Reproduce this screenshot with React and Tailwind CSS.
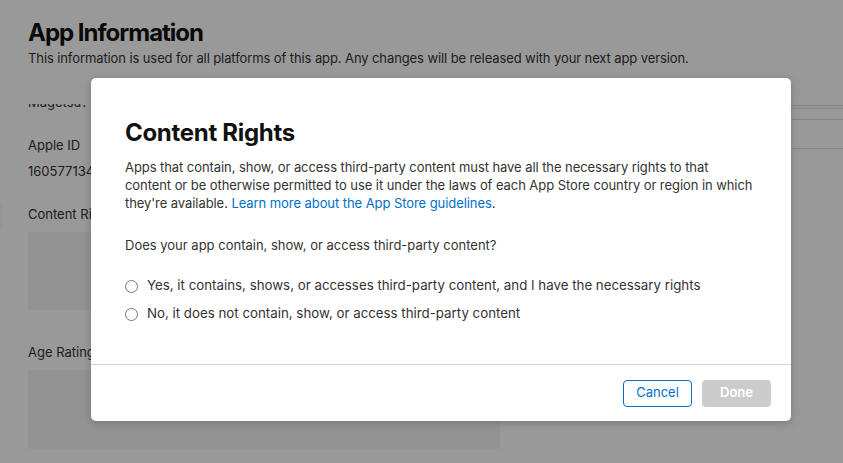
import { useState } from 'react'

const options = [
  { id: 'yes', label: 'Yes, it contains, shows, or accesses third-party content, and I have the necessary rights' },
  { id: 'no', label: 'No, it does not contain, show, or access third-party content' },
]

function Radio({ label, checked, onChange }) {
  return (
    <label className="flex items-center gap-[9px] h-[20px] cursor-pointer">
      <span
        className={`w-[13px] h-[13px] rounded-full border bg-white flex items-center justify-center ${
          checked ? 'border-[#0070c9]' : 'border-[#767676]'
        }`}
        onClick={onChange}
      >
        {checked && <span className="w-[7px] h-[7px] rounded-full bg-[#0070c9]" />}
      </span>
      <span className="text-[13.3px] text-[#333]" onClick={onChange}>
        {label}
      </span>
    </label>
  )
}

function ContentRightsModal() {
  const [value, setValue] = useState(null)

  return (
    <div className="w-[700px] h-[343px] bg-white rounded-[5px] shadow-[0_2px_10px_rgba(0,0,0,0.2)] flex flex-col">
      <div className="flex-1 pt-[40px] px-[34px]">
        <h2 className="text-[24px] leading-[30px] font-bold text-[#111] tracking-[-0.3px]">Content Rights</h2>
        <p className="mt-[10px] text-[13px] leading-[18px] text-[#333] tracking-[-0.07px]">
          Apps that contain, show, or access third-party content must have all the necessary rights to that
          content or be otherwise permitted to use it under the laws of each App Store country or region in which
          they're available.{' '}
          <a href="#" className="text-[#0070c9]">
            Learn more about the App Store guidelines
          </a>
          .
        </p>
        <p className="mt-[24px] text-[13px] leading-[18px] text-[#333]">
          Does your app contain, show, or access third-party content?
        </p>
        <div className="mt-[22px] flex flex-col gap-[8px]">
          {options.map((o) => (
            <Radio key={o.id} label={o.label} checked={value === o.id} onChange={() => setValue(o.id)} />
          ))}
        </div>
      </div>
      <div className="h-[57px] border-t border-[#d6d6d6] flex items-center justify-end gap-[10px] pr-[20px]">
        <button className="w-[69px] h-[27px] rounded-[4px] border border-[#0070c9] text-[13px] text-[#0070c9]">
          Cancel
        </button>
        <button
          disabled={!value}
          className={`w-[69px] h-[27px] rounded-[4px] text-[13px] font-semibold text-white ${
            value ? 'bg-[#0070c9]' : 'bg-[#cccccc]'
          }`}
        >
          Done
        </button>
      </div>
    </div>
  )
}

export default function App() {
  return (
    <div className="relative w-[843px] h-[463px] overflow-hidden bg-white font-['Inter',sans-serif]">
      {/* page behind */}
      <div className="pt-[18px]">
        <div className="pl-[28px]">
          <h1 className="text-[24px] leading-[30px] font-bold text-[#111] tracking-[-1px]">App Information</h1>
          <p className="mt-[1px] text-[13px] leading-[18px] text-[#333] tracking-[-0.1px]">
            This information is used for all platforms of this app. Any changes will be released with your next app
            version.
          </p>
        </div>
        <div className="mt-[37px] h-[360px] overflow-hidden flex">
          <div className="w-[3px] shrink-0 pt-[99px]">
            <div className="h-[25px] bg-[#f9f9f9] rounded-r-[3px]" />
          </div>
          <div className="w-[532px] pl-[25px] -mt-[11px]">
            <div className="text-[13px] leading-[18px] text-[#333]">Magetsu?</div>
            <div className="mt-[25px] text-[13px] leading-[18px] text-[#333]">Apple ID</div>
            <div className="mt-[8px] text-[13px] leading-[18px] text-[#333]">1605771349</div>
            <div className="mt-[25px] text-[13px] leading-[18px] text-[#333]">Content Rights</div>
            <div className="mt-[9px] h-[78px] bg-[#f5f5f5] rounded-[3px]" />
            <div className="mt-[33px] text-[13px] leading-[18px] text-[#333]">Age Rating</div>
            <div className="mt-[9px] h-[79px] w-[472px] bg-[#f5f5f5] rounded-[3px]" />
          </div>
          <div className="flex-1 ml-[20px] pt-[1px]">
            <div className="border-t border-[#dedede]" />
            <div className="mt-[2px] h-[12px] border-y border-[#dedede]" />
            <div className="mt-[28px] border-t border-[#dedede]" />
          </div>
        </div>
      </div>

      {/* overlay */}
      <div className="absolute inset-0 bg-black/40 pl-[91px] pt-[78px]">
        <ContentRightsModal />
      </div>
    </div>
  )
}
